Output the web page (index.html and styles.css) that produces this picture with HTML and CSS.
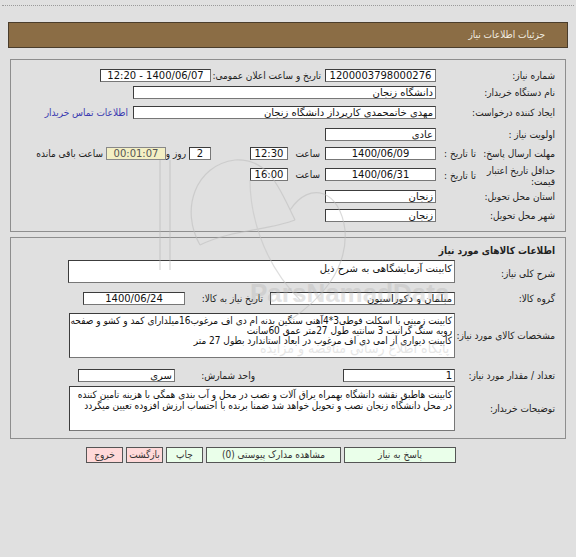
FILE: index.html
```html
<!DOCTYPE html>
<html lang="fa" dir="rtl">
<head>
<meta charset="utf-8">
<title>جزئیات اطلاعات نیاز</title>
<link rel="stylesheet" href="styles.css">
</head>
<body>
<div class="topline"></div>
<div class="header">جزئیات اطلاعات نیاز</div>

<div class="box box1">
  <div class="row r1">
    <span class="lbl">شماره نیاز:</span>
    <span class="inp w111 c b">1200003798000276</span>
    <span class="lbl ann">تاریخ و ساعت اعلان عمومی:</span>
    <span class="inp w111 c">1400/06/07 - 12:20</span>
  </div>
  <div class="row r2">
    <span class="lbl">نام دستگاه خریدار:</span>
    <span class="inp w303">دانشگاه زنجان</span>
  </div>
  <div class="row r3">
    <span class="lbl">ایجاد کننده درخواست:</span>
    <span class="inp w303">مهدی خاتمحمدی کارپرداز دانشگاه زنجان</span>
    <a class="link" href="#">اطلاعات تماس خریدار</a>
  </div>
  <div class="row r4">
    <span class="lbl">اولویت نیاز :</span>
    <span class="inp w111">عادی</span>
  </div>
  <div class="row r5">
    <span class="lbl split"><span>مهلت ارسال پاسخ:</span><span>تا تاریخ :</span></span>
    <span class="inp w111 c">1400/06/09</span>
    <span class="lbl hour">ساعت</span>
    <span class="inp w38 c">12:30</span>
    <span class="inp w22 c days">2</span>
    <span class="lbl rz">روز و</span>
    <span class="inp w60 c remain">00:01:07</span>
    <span class="lbl rem">ساعت باقی مانده</span>
  </div>
  <div class="row r6">
    <span class="lbl split two"><span class="wrap">حداقل تاریخ اعتبار قیمت:</span><span class="till">تا تاریخ :</span></span>
    <span class="inp w111 c">1400/06/31</span>
    <span class="lbl hour">ساعت</span>
    <span class="inp w38 c">16:00</span>
  </div>
  <div class="row r7">
    <span class="lbl">استان محل تحویل:</span>
    <span class="inp w111">زنجان</span>
  </div>
  <div class="row r8">
    <span class="lbl">شهر محل تحویل:</span>
    <span class="inp w111">زنجان</span>
  </div>
</div>

<div class="box box2">
  <div class="title">اطلاعات کالاهای مورد نیاز</div>
  <div class="row g1">
    <span class="lbl2">شرح کلی نیاز:</span>
    <span class="inp big">کابینت آزمایشگاهی به شرح ذیل</span>
  </div>
  <div class="row g2">
    <span class="lbl2">گروه کالا:</span>
    <span class="inp w185">مبلمان و دکوراسیون</span>
    <span class="lbl dl">تاریخ نیاز به کالا:</span>
    <span class="inp w102 c">1400/06/24</span>
  </div>
  <div class="row g3">
    <span class="lbl2">مشخصات کالای مورد نیاز:</span>
    <div class="area">
      <div class="ln">کابینت زمینی با اسکلت فوطی3*4آهنی سنگین بدنه ام دی اف مرغوب16میلدارای کمد و کشو و صفحه</div>
      <div class="ln">رویه سنگ گرانیت 3 سانتیه طول 27متر عمق 60سانت</div>
      <div class="ln">کابینت دیواری از امی دی اف مرغوب در ابعاد استاندارد بطول 27 متر</div>
    </div>
  </div>
  <div class="row g4">
    <span class="lbl2">تعداد / مقدار مورد نیاز:</span>
    <span class="inp w112">1</span>
    <span class="lbl unit">واحد شمارش:</span>
    <span class="inp w97">سری</span>
  </div>
  <div class="row g5">
    <span class="lbl2">توضیحات خریدار:</span>
    <div class="area">
      <div class="ln">کابینت هاطبق نقشه دانشگاه بهمراه یراق آلات و نصب در محل و آب بندی همگی با هزینه تامین کننده</div>
      <div class="ln">در محل دانشگاه زنجان نصب و تحویل خواهد شد ضمنا برنده با احتساب ارزش افزوده تعیین میگردد</div>
    </div>
  </div>
</div>

<div class="buttons">
  <span class="btn ok w112b">پاسخ به نیاز</span>
  <span class="btn ok w135b">مشاهده مدارک پیوستی (0)</span>
  <span class="btn ok w36b">چاپ</span>
  <span class="btn no w36b">بازگشت</span>
  <span class="btn no w37b">خروج</span>
</div>

<div class="watermark" aria-hidden="true">
  <svg class="wm-logo" width="240" height="190" viewBox="0 0 240 190">
    <path d="M20 10 L20 120 M30 10 L30 120" fill="none" stroke="#b8b8b8" stroke-width="1.2"/>
    <path d="M60 95 C40 60 55 15 95 10 C130 8 140 40 155 70" fill="none" stroke="#bdbdbd" stroke-width="1.2"/>
    <path d="M60 95 C90 80 130 80 155 70" fill="none" stroke="#bdbdbd" stroke-width="1.2"/>
    <path d="M150 60 C170 30 200 40 205 80 C208 120 180 150 150 170" fill="none" stroke="#bdbdbd" stroke-width="1.2"/>
    <path d="M110 30 C110 60 120 110 160 150" fill="none" stroke="#c4c4c4" stroke-width="1.2"/>
  </svg>
  <span class="wm1">ParsNamadData</span>
  <span class="wm2">پایگاه اطلاع رسانی مناقصه و مزایده</span>
</div>
</body>
</html>
```

FILE: styles.css
```css
html, body {
  margin: 0;
  padding: 0;
}
body {
  background: #e0e0e0;
  font-family: "DejaVu Sans Condensed", "DejaVu Sans", "Liberation Sans", sans-serif;
  font-size: 10px;
  color: #222;
  width: 576px;
  height: 557px;
  overflow: hidden;
  position: relative;
}
.topline {
  margin: 5px 2px 0;
  border-top: 1px dotted #9a9a9a;
}
.header {
  margin: 16px 8px 0;
  height: 26px;
  box-sizing: border-box;
  background: #8b6d45;
  border: 1px solid #4a3d2c;
  color: #f2ede2;
  font-size: 10px;
  line-height: 24px;
  padding-right: 22px;
}
.box {
  margin: 0 10px;
  border: 1px solid #8e8e8e;
  box-sizing: border-box;
  position: relative;
  z-index: 1;
}
.box1 {
  margin-top: 11px;
  height: 173px;
  padding: 9px 8px 0 0;
}
.box2 {
  margin-top: 5px;
  height: 202px;
  padding: 6px 8px 0 0;
}
.row {
  display: flex;
  align-items: center;
  height: 13px;
}
.lbl {
  width: 121px;
  flex: none;
  line-height: 13px;
  white-space: nowrap;
  padding-right: 2px;
  box-sizing: border-box;
}
.lbl2 {
  width: 102px;
  flex: none;
  white-space: nowrap;
  padding-right: 2px;
  box-sizing: border-box;
}
.inp {
  flex: none;
  height: 13px;
  box-sizing: border-box;
  background: #fff;
  border: 1px solid #3c3c3c;
  border-right-color: #777;
  border-bottom-color: #777;
  line-height: 11px;
  padding: 0 2px;
  white-space: nowrap;
  overflow: hidden;
  font-family: "DejaVu Sans", sans-serif;
  font-size: 10px;
  color: #111;
}
.c { text-align: center; }
.w111 { width: 111px; }
.w303 { width: 303px; }
.w38 { width: 38px; }
.w22 { width: 22px; }
.w60 { width: 60px; }
.w185 { width: 185px; }
.w102 { width: 102px; }
.w112 { width: 112px; }
.w97 { width: 97px; }

.ann { width: 112px; margin-right: 2px; }
.link {
  margin-right: 5px;
  color: #3b3bb0;
  text-decoration: none;
  white-space: nowrap;
}
.split {
  display: flex;
  justify-content: space-between;
  padding-left: 8px;
}
.hour { width: 37px; padding-right: 5px; }
.days { margin-right: 39px; }
.rz { width: 23px; padding-right: 3px; }
.remain {
  background: #f3efc4;
  color: #555;
  border-color: #888;
}
.rem { width: auto; padding-right: 3px; }

.r2 { margin-top: 4px; }
.r3 { margin-top: 7px; }
.r4 { margin-top: 9px; }
.r5 { margin-top: 6px; }
.r6 {
  margin-top: 5px;
  height: 23px;
  align-items: flex-start;
}
.r6 .inp { margin-top: 3px; }
.r6 .hour { margin-top: 3px; }
.two { height: 23px; align-items: flex-start; }
.two .wrap {
  white-space: normal;
  width: 74px;
  line-height: 11px;
}
.two .till { margin-top: 4px; }
.r7 { margin-top: 2px; }
.r8 { margin-top: 6px; }

.title {
  font-weight: bold;
  line-height: 13px;
  height: 13px;
  padding-right: 2px;
}
.g1 { margin-top: 3px; height: 23px; }
.big {
  width: 387px;
  height: 23px;
  line-height: 14px;
  padding-top: 1px;
  align-self: flex-start;
}
.g1 .lbl2 { padding-top: 4px; }
.g2 { margin-top: 9px; }
.dl { width: 85px; padding-right: 7px; }
.g3 { margin-top: 8px; height: 45px; }
.area {
  width: 386px;
  height: 45px;
  box-sizing: border-box;
  background: #fff;
  border: 1px solid #3c3c3c;
  border-right-color: #777;
  border-bottom-color: #777;
  padding: 2px 2px 0;
  overflow: hidden;
  color: #111;
}
.ln {
  white-space: nowrap;
  line-height: 10px;
  font-size: 10px;
}
.g4 { margin-top: 11px; }
.unit { width: 168px; padding-right: 88px; }
.g5 { margin-top: 4px; height: 45px; }
.g5 .ln { line-height: 11px; }

.buttons {
  display: flex;
  gap: 3px;
  margin-top: 8px;
  padding-right: 120px;
}
.btn {
  height: 16px;
  box-sizing: border-box;
  border: 1px solid #555;
  text-align: center;
  line-height: 14px;
  font-size: 10px;
  color: #333;
  white-space: nowrap;
}
.ok { background: #eaffea; }
.no { background: #ffd9d9; }
.w112b { width: 112px; }
.w135b { width: 135px; }
.w36b { width: 37px; }
.w37b { width: 37px; }

.watermark {
  position: absolute;
  left: 140px;
  top: 150px;
  width: 300px;
  height: 260px;
  pointer-events: none;
  text-align: center;
  z-index: 2;
  opacity: 0.55;
}
.wm-logo {
  position: absolute;
  left: 0;
  top: 0;
}
.wm1 {
  position: absolute;
  left: 110px;
  top: 128px;
  direction: ltr;
  font-family: "Liberation Sans", sans-serif;
  font-weight: bold;
  font-size: 26px;
  color: #b0b0b0;
  opacity: 0.6;
}
.wm2 {
  position: absolute;
  left: 120px;
  top: 190px;
  white-space: nowrap;
  font-size: 14px;
  color: #b5b5b5;
  opacity: 0.6;
}
```
